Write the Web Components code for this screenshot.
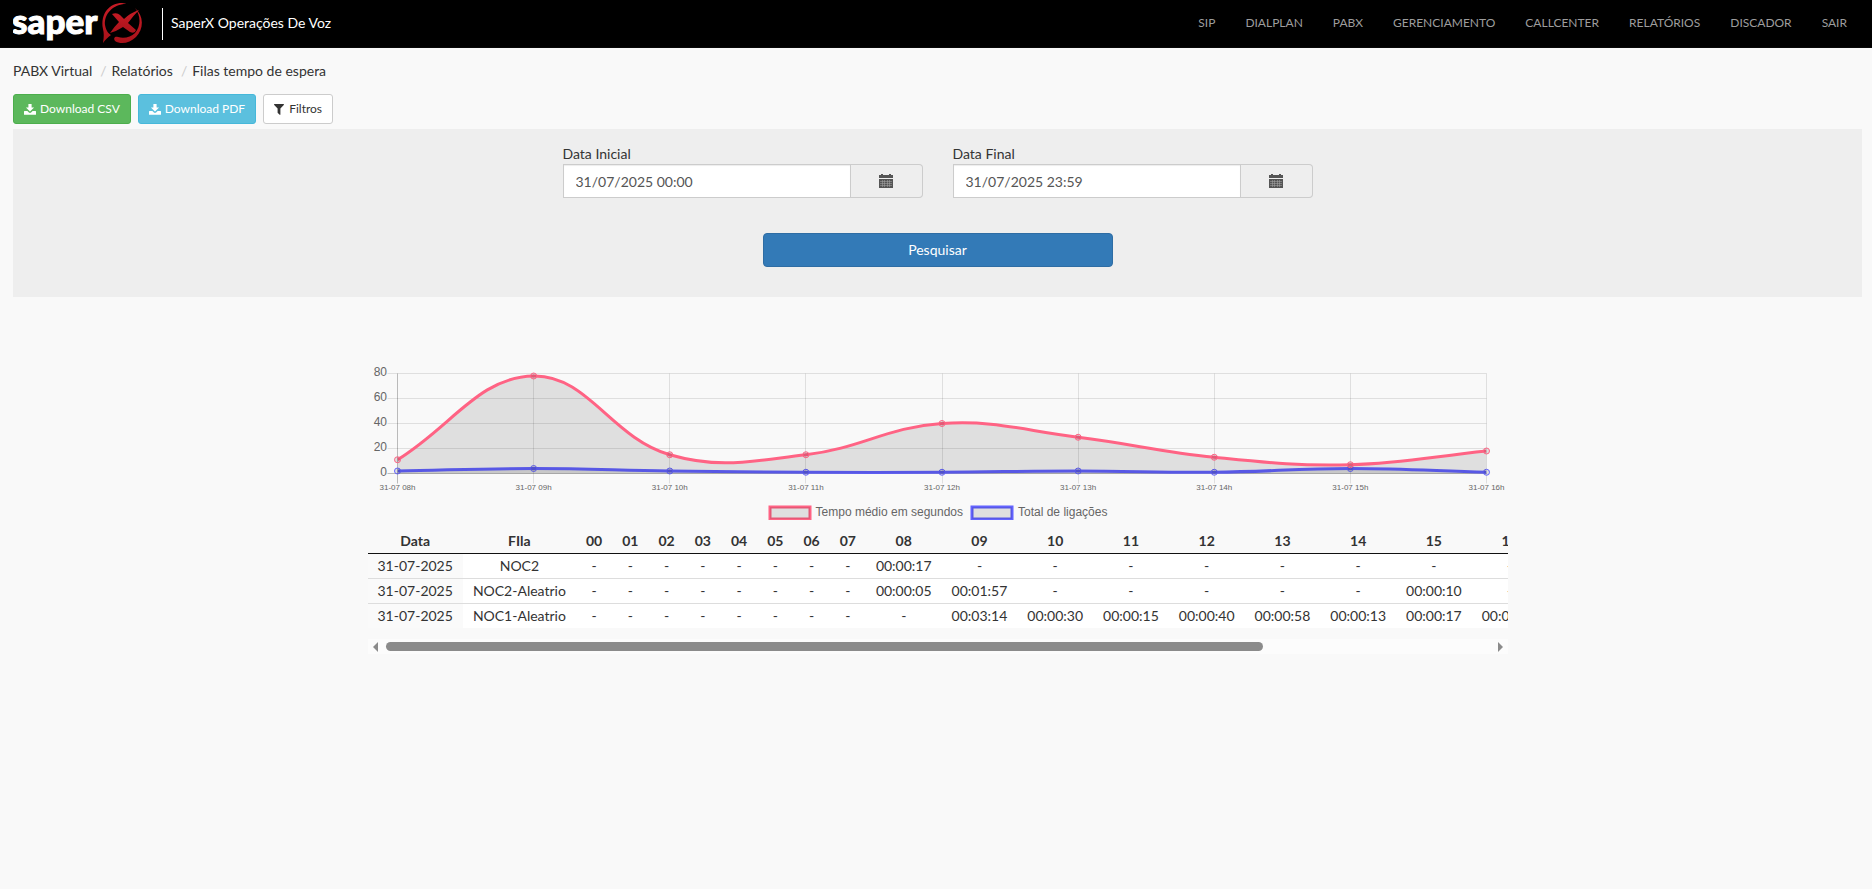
<!DOCTYPE html>
<html lang="pt-BR">
<head>
<meta charset="utf-8">
<title>SaperX Operações De Voz</title>
<style>
  body { margin: 0; background: #f9f9f9; color: #333; font: 14px/20px Lato, "Liberation Sans", sans-serif; }
</style>
</head>
<body>
<saper-header heading="SaperX Operações De Voz">
  <saper-nav-link href="#sip">SIP</saper-nav-link>
  <saper-nav-link href="#dialplan">DIALPLAN</saper-nav-link>
  <saper-nav-link href="#pabx">PABX</saper-nav-link>
  <saper-nav-link href="#gerenciamento">GERENCIAMENTO</saper-nav-link>
  <saper-nav-link href="#callcenter">CALLCENTER</saper-nav-link>
  <saper-nav-link href="#relatorios">RELATÓRIOS</saper-nav-link>
  <saper-nav-link href="#discador">DISCADOR</saper-nav-link>
  <saper-nav-link href="#sair">SAIR</saper-nav-link>
</saper-header>
<saper-page>
  <saper-breadcrumb slot="top" items="PABX Virtual|Relatórios|Filas tempo de espera"></saper-breadcrumb>
  <saper-button slot="actions" kind="success" icon="download">Download CSV</saper-button>
  <saper-button slot="actions" kind="info" icon="download">Download PDF</saper-button>
  <saper-button slot="actions" kind="default" icon="filter">Filtros</saper-button>
  <saper-filter>
    <saper-date label="Data Inicial" value="31/07/2025 00:00"></saper-date>
    <saper-date label="Data Final" value="31/07/2025 23:59"></saper-date>
    <saper-button slot="submit" kind="primary">Pesquisar</saper-button>
  </saper-filter>
  <saper-report slot="report">
    <saper-chart></saper-chart>
    <saper-table></saper-table>
  </saper-report>
</saper-page>

<script>
const define = (name, html, setup) => {
  const template = document.createElement('template');
  template.innerHTML = html;
  customElements.define(name, class extends HTMLElement {
    constructor() {
      super();
      this.attachShadow({ mode: 'open' }).append(template.content.cloneNode(true));
    }
    connectedCallback() {
      if (setup && !this.ready) { this.ready = true; setup(this, this.shadowRoot); }
    }
  });
};

define('saper-logo', `
<style>
  :host { display: block; }
  svg { display: block; }
</style>
<svg width="134" height="47" viewBox="0 0 134 47" role="img" aria-label="saper X">
  <defs>
    <linearGradient id="red" x1="0" y1="0" x2="0" y2="1">
      <stop offset="0" stop-color="#c81c26"/><stop offset="1" stop-color="#a8121a"/>
    </linearGradient>
  </defs>
  <text x="-1" y="34" fill="#fff" stroke="#fff" stroke-width="1" font-family="Lato" font-weight="900" font-size="35">saper</text>
  <g transform="translate(-13 0)" fill="url(#red)">
    <path d="M103 43 C104 37 104 33 103 29 C100 13 110 3 122 3 C124 3 126 4 126 4 C113 4 104 14 105 25 C106 31 109 34 111 35 C108 37 105 40 103 43Z"/>
    <path d="M135 8 C144 16 144 29 136 37 C130 43 121 45 115 41 C113 38 115 36 118 37 C124 39 131 37 135 33 C141 26 141 16 135 8Z"/>
    <path d="M112 14 Q117 12 120 15 L124 19 Q130 13 139 10 Q133 16 128 23 L136 30 Q135 34 130 32 L123 27 Q117 31 110 33 Q114 27 119 22Z"/>
  </g>
</svg>`);

define('saper-nav-link', `
<style>
  :host { display: block; }
  a { display: block; padding: 13px 15px 14px; color: #9d9d9d; font-size: 12px; line-height: 20px; text-decoration: none; }
</style>
<a><slot></slot></a>`, (el, root) => { root.querySelector('a').href = el.getAttribute('href'); });

define('saper-header', `
<style>
  :host { display: block; background: #000; border-bottom: 1px solid #080808; }
  header { display: flex; align-items: center; min-height: 47px; padding: 0 10px 0 13px; }
  .brand { display: flex; align-items: center; color: #fff; text-decoration: none; }
  .title { box-sizing: border-box; height: 32px; margin-left: 15px; padding: 5px 0 0 8px; border-left: 1px solid #fff; line-height: 20px; white-space: nowrap; }
  nav { display: flex; margin-left: auto; }
</style>
<header>
  <a class="brand" href="#inicio"><saper-logo></saper-logo><span class="title"></span></a>
  <nav><slot></slot></nav>
</header>`, (el, root) => { root.querySelector('.title').textContent = el.getAttribute('heading'); });

define('saper-page', `
<style>
  :host { display: block; padding: 13px 10px 0 13px; }
  .actions { display: flex; gap: 7px; margin: 13px 0 5px; }
</style>
<main>
  <slot name="top"></slot>
  <div class="actions"><slot name="actions"></slot></div>
  <slot></slot>
  <slot name="report"></slot>
</main>`);

define('saper-breadcrumb', `
<style>
  :host { display: block; }
  ol { display: flex; margin: 0; padding: 0; list-style: none; }
  li + li::before { content: "/"; padding: 0 5px 0 8px; color: #ccc; }
  a { color: inherit; text-decoration: none; }
</style>
<ol></ol>`, (el, root) => {
  const items = el.getAttribute('items').split('|');
  root.querySelector('ol').innerHTML = items.map((t, i) =>
    i < items.length - 1 ? `<li><a href="#${i}">${t}</a></li>` : `<li>${t}</li>`).join('');
});

const icons = {
  download: '<svg width="12" height="11" viewBox="0 0 12 11" fill="currentColor"><path d="M4.400 0h3.200v3.600h2.500L6 7.600 1.900 3.600h2.500z"/><path d="M.4 7h3l1.500 1.500q1.100.900 2.200 0L8.600 7h3q.4 0 .4.4v3q0 .4-.4.4H.4q-.4 0-.4-.4v-3Q0 7 .4 7z"/></svg>',
  filter: '<svg width="10" height="11" viewBox="0 0 10 11" fill="currentColor"><path d="M.4 0h9.200q.6.300.2.900L6.400 4.500V10.600q-.2.500-.7.200L3.800 9.100q-.2-.2-.2-.5V4.500L.2.900Q-.2.300.4 0z"/></svg>'
};
define('saper-button', `
<style>
  :host { display: block; }
  button { display: flex; align-items: center; justify-content: center; gap: 4px; box-sizing: border-box; width: 100%; min-height: 30px; margin: 0; padding: 5px 10px; border: 1px solid; border-radius: 3px; font: inherit; font-size: 12px; line-height: 18px; white-space: nowrap; cursor: pointer; }
  .success { color: #fff; background: #5cb85c; border-color: #4cae4c; }
  .info { color: #fff; background: #5bc0de; border-color: #46b8da; }
  .default { gap: 5px; color: #333; background: #fff; border-color: #ccc; }
  .primary { min-height: 34px; border-radius: 4px; font-size: 14px; line-height: 20px; color: #fff; background: #337ab7; border-color: #2e6da4; }
</style>
<button type="button"><slot></slot></button>`, (el, root) => {
  const button = root.querySelector('button');
  button.className = el.getAttribute('kind');
  button.insertAdjacentHTML('afterbegin', icons[el.getAttribute('icon')] || '');
});

define('saper-filter', `
<style>
  :host { display: block; background: #eee; padding: 15px 15px 30px; }
  .fields { display: flex; justify-content: center; gap: 30px; }
  .submit { width: 350px; max-width: 100%; margin: 35px auto 0; }
</style>
<form onsubmit="return false">
  <div class="fields"><slot></slot></div>
  <div class="submit"><slot name="submit"></slot></div>
</form>`);

define('saper-date', `
<style>
  :host { display: block; flex: 0 1 360px; min-width: 0; }
  label { display: block; line-height: 20px; }
  .group { display: flex; }
  input { flex: 1; min-width: 0; box-sizing: border-box; height: 34px; margin: 0; padding: 6px 12px; border: 1px solid #ccc; background: #fff; box-shadow: inset 0 1px 1px rgba(0,0,0,.075); color: #555; font: inherit; }
  button { box-sizing: border-box; width: 72px; height: 34px; margin: 0; padding: 0; border: 1px solid #ccc; border-left: 0; border-radius: 0 4px 4px 0; background: #eee; color: #555; }
  svg { display: block; margin: auto; }
</style>
<label for="date"></label>
<div class="group">
  <input id="date" type="text">
  <button type="button" aria-label="Abrir calendário">
    <svg width="14" height="14" viewBox="0 0 14 14">
      <path fill="#555" d="M0 1h2V0h2v1h6V0h2v1h2v3H0zM0 5h14v9H0z"/>
      <path stroke="#aaa" d="M1 7.500h12M1 9.500h12M1 11.500h12M3.500 6v7M5.500 6v7M8.500 6v7M10.500 6v7" stroke-width=".5"/>
    </svg>
  </button>
</div>`, (el, root) => {
  root.querySelector('label').textContent = el.getAttribute('label');
  root.querySelector('input').value = el.getAttribute('value');
});

define('saper-report', `
<style>
  :host { display: block; max-width: 1140px; margin: 65px auto 0; }
</style>
<slot></slot>`);

define('saper-chart', `
<style>
  :host { display: block; font-family: "Liberation Sans", Arial, sans-serif; }
  svg { display: block; }
  .plot { width: 100%; height: auto; overflow: visible; }
  text { fill: #666; font-size: 12px; }
  .x { font-size: 8px; text-anchor: middle; }
  .y { text-anchor: end; }
  .legend { display: flex; justify-content: center; gap: 7px; color: #666; font-size: 12px; line-height: 16px; }
  .legend span { display: flex; align-items: center; gap: 4px; }
</style>
<svg class="plot" viewBox="0 0 1140 142" role="img" aria-label="Tempo médio em segundos e total de ligações por hora"></svg>
<div class="legend"></div>`, (el, root) => {
  const series = [
    { name: 'Tempo médio em segundos', color: 'rgb(255,99,132)', data: [11, 78, 15, 15, 40, 29, 13, 7, 18] },
    { name: 'Total de ligações', color: 'rgb(99,99,255)', data: [2, 4, 2, 1, 1, 2, 1, 4, 1] }
  ];
  const left = 29.5, right = 1118.5, top = 11.5, bottom = 111.5, count = 9;
  const px = i => left + (right - left) * i / (count - 1);
  const py = v => bottom - v * (bottom - top) / 80;
  const snap = v => Math.floor(v) + .5;
  const clamp = v => Math.max(top, Math.min(bottom, v));

  // Smooth curve: each control point follows the direction between its neighbours.
  const curve = pts => {
    const ctl = pts.map((p, i) => {
      const a = pts[i - 1] || p, b = pts[i + 1] || p;
      const d1 = Math.hypot(p[0] - a[0], p[1] - a[1]), d2 = Math.hypot(b[0] - p[0], b[1] - p[1]);
      const k1 = .4 * d1 / (d1 + d2), k2 = .4 * d2 / (d1 + d2);
      return [p[0] - k1 * (b[0] - a[0]), clamp(p[1] - k1 * (b[1] - a[1])),
              p[0] + k2 * (b[0] - a[0]), clamp(p[1] + k2 * (b[1] - a[1]))];
    });
    return 'M' + pts[0] + pts.slice(1).map((p, i) =>
      'C' + [ctl[i][2], ctl[i][3], ctl[i + 1][0], ctl[i + 1][1], p[0], p[1]]).join('');
  };

  let out = `<clipPath id="area"><rect x="${left}" y="${top - 2}" width="${right - left}" height="${bottom - top + 3}"/></clipPath>`;
  for (let i = 0; i < count; i++) {
    const x = snap(px(i));
    out += `<path d="M${x} ${top}V${bottom + 10}" stroke="#000" stroke-opacity="${i ? .1 : .25}"/>`;
    out += `<text class="x" x="${px(i)}" y="128">31-07 ${String(i + 8).padStart(2, '0')}h</text>`;
  }
  for (let v = 0; v <= 80; v += 20) {
    out += `<path d="M${left - 10} ${py(v)}H${right}" stroke="#000" stroke-opacity="${v ? .1 : .25}"/>`;
    out += `<text class="y" x="19" y="${Math.round(py(v) + 2)}">${v}</text>`;
  }
  for (const s of [...series].reverse()) {
    const pts = s.data.map((v, i) => [px(i), py(v)]), d = curve(pts);
    out += `<g clip-path="url(#area)"><path d="${d}V${bottom}H${left}Z" fill="#000" fill-opacity=".1"/>
      <path d="${d}" fill="none" stroke="${s.color}" stroke-width="3"/></g>`;
    out += pts.map(p => `<circle cx="${p[0]}" cy="${p[1]}" r="3" fill="#000" fill-opacity=".1" stroke="${s.color}"/>`).join('');
  }
  root.querySelector('.plot').innerHTML = out;
  root.querySelector('.legend').innerHTML = series.map(s => `<span>
    <svg width="44" height="16"><rect x="2" y="3" width="40" height="12" fill="none" stroke="${s.color}" stroke-width="3"/><rect x="2" y="3" width="40" height="12" fill="#000" fill-opacity=".1"/></svg>${s.name}</span>`).join('');
});

define('saper-table', `
<style>
  :host { display: block; margin-top: 9px; }
  .view { overflow-x: auto; scrollbar-width: none; }
  table { border-collapse: separate; border-spacing: 0; white-space: nowrap; text-align: center; }
  th, td { padding: 2px 10px; line-height: 20px; }
  th { border-bottom: 1px solid #111; font-weight: 700; }
  td { background: #fff; }
  td:first-child { background: #fafafa; }
  tr + tr td { border-top: 1px solid #ddd; }
  .bar { display: flex; align-items: center; height: 15px; margin-top: 11px; background: #fcfcfc; }
  .bar button { display: flex; align-items: center; justify-content: center; width: 15px; height: 15px; margin: 0; padding: 0; border: 0; background: none; }
  .track { flex: 1; margin: 0 3px; }
  .thumb { height: 9px; border-radius: 5px; background: #8b8b8b; }
</style>
<div class="view" tabindex="0"><table><thead></thead><tbody></tbody></table></div>
<div class="bar">
  <button type="button" aria-label="Rolar para a esquerda"><svg width="5" height="10"><path d="M5 0v10L0 5z" fill="#8b8b8b"/></svg></button>
  <div class="track"><div class="thumb"></div></div>
  <button type="button" aria-label="Rolar para a direita"><svg width="5" height="10"><path d="M0 0v10l5-5z" fill="#8b8b8b"/></svg></button>
</div>`, (el, root) => {
  const hours = Array.from({ length: 24 }, (_, i) => String(i).padStart(2, '0'));
  const rows = [
    ['NOC2', { 8: '00:00:17' }],
    ['NOC2-Aleatrio', { 8: '00:00:05', 9: '00:01:57', 15: '00:00:10' }],
    ['NOC1-Aleatrio', { 9: '00:03:14', 10: '00:00:30', 11: '00:00:15', 12: '00:00:40', 13: '00:00:58', 14: '00:00:13', 15: '00:00:17', 16: '00:00:18' }]
  ];
  root.querySelector('thead').innerHTML = '<tr>' + ['Data', 'FIla', ...hours].map(t => `<th scope="col">${t}</th>`).join('') + '</tr>';
  root.querySelector('tbody').innerHTML = rows.map(([name, times]) =>
    `<tr><td>31-07-2025</td><td>${name}</td>${hours.map((_, h) => `<td>${times[h] || '-'}</td>`).join('')}</tr>`).join('');

  const view = root.querySelector('.view'), thumb = root.querySelector('.thumb');
  const sync = () => {
    thumb.style.width = 100 * view.clientWidth / view.scrollWidth + '%';
    thumb.style.marginLeft = 100 * view.scrollLeft / view.scrollWidth + '%';
  };
  const [back, next] = root.querySelectorAll('button');
  back.onclick = () => { view.scrollLeft -= 40; };
  next.onclick = () => { view.scrollLeft += 40; };
  view.addEventListener('scroll', sync);
  new ResizeObserver(sync).observe(view);
  sync();
});
</script>
</body>
</html>
